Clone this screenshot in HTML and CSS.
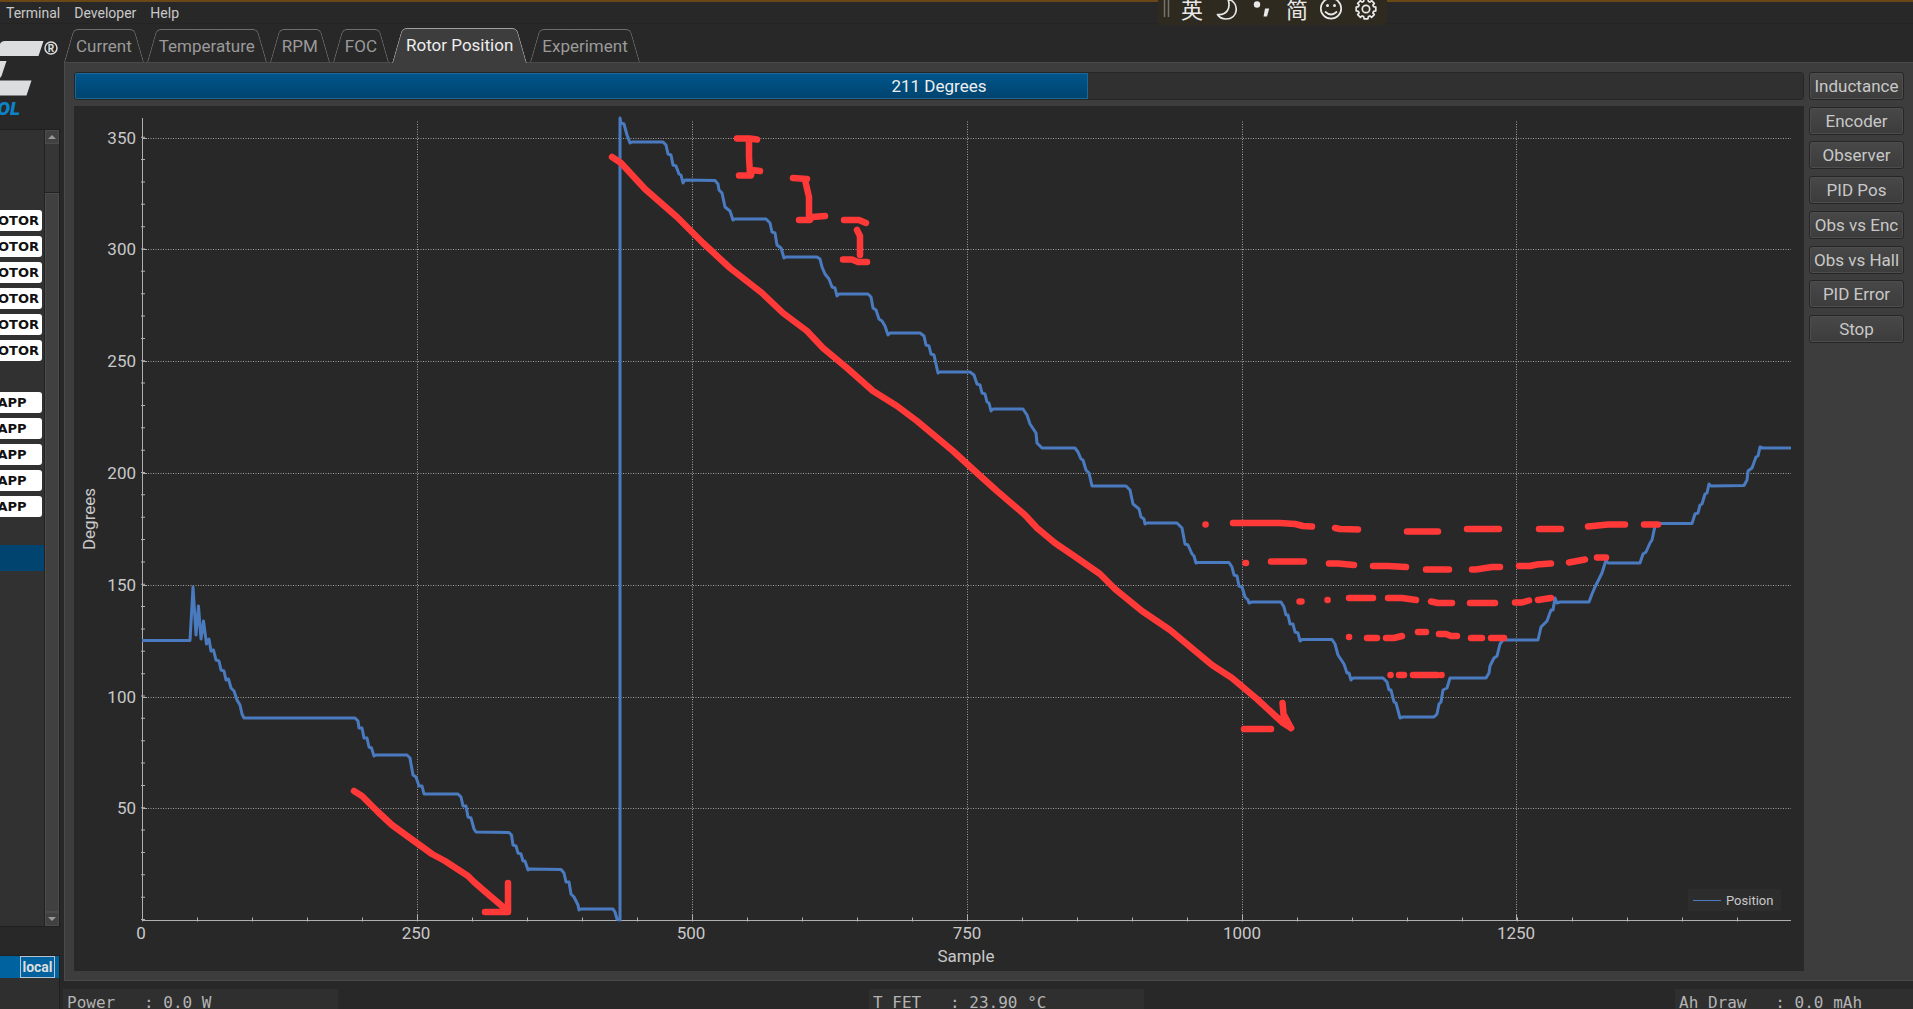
FILE: index.html
```html
<!DOCTYPE html>
<html lang="en">
<head>
<meta charset="utf-8">
<title>Rotor Position</title>
<link rel="stylesheet" href="styles.css">
</head>
<body>
<div class="app">
  <nav class="menubar">
    <button type="button">Terminal</button>
    <button type="button">Developer</button>
    <button type="button">Help</button>
  </nav>

  <div class="ime">
    <svg width="229" height="25" viewBox="1158 0 229 25" aria-hidden="true">
      <path d="M1164.5 0V17M1168.5 0V17" stroke="#77736b" stroke-width="1.5"/>
      <g fill="none" stroke="#e8e8e8" stroke-width="1.7" stroke-linejoin="round" stroke-linecap="round">
        <path d="M1229 -1C1240 4 1238 19 1226 19C1222 19 1219 17 1217.500 14.500C1227 15.500 1231 8 1228 -1"/>
        <circle cx="1331" cy="8.500" r="10.200"/>
        <path d="M1325.500 12Q1331 17 1336.500 12"/>
        <g transform="translate(1366 9)">
          <circle r="3.700"/>
          <path d="M9.800 1.900L7.600 2.400L6.900 3.900L8.300 5.600L5.600 8.300L3.900 6.900L2.400 7.600L1.900 9.800H-1.900L-2.400 7.600L-3.900 6.900L-5.600 8.300L-8.300 5.600L-6.900 3.900L-7.600 2.400L-9.800 1.900V-1.900L-7.600 -2.400L-6.900 -3.900L-8.300 -5.600L-5.600 -8.300L-3.900 -6.900L-2.400 -7.600L-1.900 -9.800H1.900L2.400 -7.600L3.900 -6.900L5.600 -8.300L8.300 -5.600L6.900 -3.900L7.600 -2.400L9.800 -1.900z"/>
        </g>
      </g>
      <g fill="#e8e8e8">
        <circle cx="1257" cy="4.500" r="3.200"/>
        <path d="M1265 8.500h4.200L1267 16.500h-3.500z"/>
        <circle cx="1327.500" cy="5.500" r="1.500"/><circle cx="1334.500" cy="5.500" r="1.500"/>
        <text class="ime-glyph" x="1181" y="18">英</text>
        <text class="ime-glyph" x="1286" y="18">简</text>
      </g>
    </svg>
  </div>

  <div class="workspace">
    <aside class="sidebar">
      <svg class="logo" width="60" height="99" viewBox="0 24 60 99" role="img" aria-label="Logo">
        <path fill="#dcdddf" d="M0 44Q1 41 5 41H43.500L38.500 56H0zM0 61H6.500L1.500 76L0 78zM0 80.500H31.500L26.500 95.500H0z"/>
        <circle cx="51" cy="48" r="6" fill="none" stroke="#dcdddf" stroke-width="1.500"/>
        <text class="logo-mark" x="51" y="52">R</text>
        <text class="logo-name" x="20" y="115">TOOL</text>
      </svg>
      <div class="config">
        <ul class="rows">
          <li><span class="badge">MOTOR</span></li>
          <li><span class="badge">MOTOR</span></li>
          <li><span class="badge">MOTOR</span></li>
          <li><span class="badge">MOTOR</span></li>
          <li><span class="badge">MOTOR</span></li>
          <li><span class="badge">MOTOR</span></li>
          <li></li>
          <li><span class="badge">APP</span></li>
          <li><span class="badge">APP</span></li>
          <li><span class="badge">APP</span></li>
          <li><span class="badge">APP</span></li>
          <li><span class="badge">APP</span></li>
          <li></li>
          <li class="selected"></li>
        </ul>
        <div class="scroll">
          <span class="arrow up"></span>
          <span class="track"></span>
          <span class="thumb"></span>
          <span class="arrow down"></span>
        </div>
      </div>
      <div class="can"><div class="can-row"><span>local</span></div></div>
    </aside>

    <main class="content">
      <div class="tabs" role="tablist">
        <button type="button" role="tab"><span>Current</span></button>
        <button type="button" role="tab"><span>Temperature</span></button>
        <button type="button" role="tab"><span>RPM</span></button>
        <button type="button" role="tab"><span>FOC</span></button>
        <button type="button" role="tab" class="active" aria-selected="true"><span>Rotor Position</span></button>
        <button type="button" role="tab"><span>Experiment</span></button>
      </div>
      <section class="page">
        <div class="view">
          <div class="meter">
            <progress id="pos" max="360" value="211"></progress>
            <label for="pos">211 Degrees</label>
          </div>
          <div class="plot">
            <svg viewBox="74 106 1730 865" role="img" aria-label="Rotor position in degrees by sample">
              <g class="grid">
                <path d="M143 138.500H1791M143 249.500H1791M143 361.500H1791M143 473.500H1791M143 585.500H1791M143 697.500H1791M143 808.500H1791"/>
                <path d="M417.500 920V120M692.500 920V120M967.500 920V120M1242.500 920V120M1516.500 920V120"/>
              </g>
              <path class="axis" d="M142.500 118V920.500H1791"/>
              <path class="axis" d="M142 138.500h5M142 249.500h5M142 361.500h5M142 473.500h5M142 585.500h5M142 697.500h5M142 808.500h5M417.500 920v-5M692.500 920v-5M967.500 920v-5M1242.500 920v-5M1516.500 920v-5"/>
              <path class="minor-y" d="M143 920V118"/>
              <path class="minor-x" d="M142 919.500H1791"/>
              <g class="labels y-labels">
                <text x="136" y="144">350</text>
                <text x="136" y="255">300</text>
                <text x="136" y="367">250</text>
                <text x="136" y="479">200</text>
                <text x="136" y="591">150</text>
                <text x="136" y="703">100</text>
                <text x="136" y="814">50</text>
              </g>
              <g class="labels x-labels">
                <text x="141" y="939">0</text>
                <text x="416" y="939">250</text>
                <text x="691" y="939">500</text>
                <text x="967" y="939">750</text>
                <text x="1242" y="939">1000</text>
                <text x="1516" y="939">1250</text>
                <text x="966" y="962">Sample</text>
                <text transform="translate(95 519) rotate(-90)">Degrees</text>
              </g>
              <polyline class="trace" points="142,640.5 190,640.5 193,587 196,635 198.500,606 201,639 203.500,621 206.500,644 209,639 211,651 213.500,650 216,660 219,661 221,670 224,671 226,680 228.500,679 231,688 234,691 237,700 240,705 242,714 244,718 355,718 358,721 359,728 362,728 364,738 367,738 369,747 371.500,748 374,756 376,755 407,755 410,758 411,764 413,775 416,777 419,786 422,786 424,794 458,794 461,797 463,806 466,806 468,817 471,818 474,829 476,832 509,832.5 511.500,835 513,845 516,846 518,853 521,854 523,861 525,861 528,870 529,869 561,869.5 564,873 566,882 569,882 571,894 574,897 578,905 579,910 581,909 613,909 615,912 617,919 620,920 620,118 621,123 624,124 627,135 630,143 632,142 663,142 666,145 668,154 671,155 673,165 676,166 679,174 681,175 683,183 685,180 715,180.5 718,184 719,190 722,193 725,207 730,211 733,220 735,219 766,219 770,223 772,232 775,233 777,245 781,248 784,258 786,257 817,257 820,259 822,267 825,274 829,279 832,287 835,288 837,296 839,294 868,294 871,297 873,308 876,310 879,319 882,321 885,326 888,335 890,333 920,333 924,336 926,345 929,346 931,354 934,355 938,373 940,372 970,372 974,375 977,384 980,385 982,393 985,394 987,402 989,403 991,411 993,409 1023,409 1027,415 1030,424 1036,433 1037,443 1042,448 1075,448 1078,452 1081,459 1083,460 1086,470 1089,473 1092,486 1126,486 1130,490 1133,504 1139,509 1141,517 1144,519 1145,524 1147,523 1177,523 1182,528 1185,544 1188,545 1192,554 1194,556 1196,563 1198,562.5 1229,562.5 1232,567 1234,575 1237,576 1239,586 1242,587 1245,597 1248,600 1249,603 1252,602 1281,602 1284,607 1286,615 1288,615 1290,624 1293,624 1295,632 1298,633 1300,641 1302,639.5 1332,639.5 1335,644 1338,655 1344,664 1347,673 1349,673 1351,680 1353,678 1383,678 1387,682 1389,690 1391,690 1394,702 1396,703 1400,718 1403,717 1434,717 1437,714 1439,704 1441,702 1443,690 1447,688 1450,678 1486,678 1489,673 1490,666 1494,658 1497,656 1500,644 1503,640 1538,640 1541,627 1547,621 1551,610 1553,610 1555,598 1557,603 1560,602 1589,602 1592,594 1595,587 1600,577 1602,573 1606,560 1608,563 1640,563 1643,554 1646,552 1650,543 1652,540 1655,526 1658,523.5 1692,523.5 1695,514 1698,513 1700,505 1702,504 1705,494 1707,493 1709,484 1711,486 1744,485.5 1747,480 1748,471 1752,468 1756,457 1758,456 1760,447 1763,448 1791,448"/>
              <rect x="1688" y="889" width="93" height="22" fill="#2d2d2d"/>
              <path d="M1693 900.500H1721" stroke="#4a7bc0"/>
              <text class="legend" x="1726" y="905">Position</text>
              <!-- marker pen: brackets, arrows, level lines -->
              <g class="pen">
                <path d="M737 138.500H750L757 139.500M749 139V157L750 174M739 175.500H751L752 170L760 171"/>
                <path d="M793 178L807 179M805 180L809 197V218M799 220H810L812 217L825 216"/>
                <path d="M844 220H859L866 223M857 230L860 236V255M843 259.500H852L858 262H867"/>
                <path d="M612 157L621 163L645 189L677 217L703 243L730 268L762 293L783 313L807 331L823 348L847 368L873 391L897 406L917 421L953 451L977 473L997 491L1025 515L1037 528L1055 543L1077 558L1100 574L1115 589L1142 611L1170 630L1212 665L1232 678L1257 699L1283 723L1291 728"/>
                <path d="M1282.500 703L1283.500 714L1291 728M1280 719L1288 725M1244 729H1271"/>
                <path d="M354 791L362 796L378 812L392 825L432 854L445 861L468 876L474 882L489 895L508 911M508 883V912H485"/>
                <path d="M1205.500 524.500h.1M1233 523H1280L1295 524L1303 526L1312 526.500M1335 528L1340 529L1358 529.500M1407 531.500H1438M1467 529H1499M1539 529H1561M1588 526.500L1608 524.500H1625M1644 524.500H1658"/>
                <path d="M1245.500 563h.5M1271 561.500H1304M1329 563.500H1338L1354 565M1373 566H1388L1406 567M1426 569.500H1449M1472 569.500H1476L1492 567H1500M1519 566H1530L1537 564.500L1551 563.500M1569 562.500L1585 559.500M1597 557.500H1606"/>
                <path d="M1299.500 601.500h2M1327.500 600h.1M1349 598H1373M1388 598H1402L1416 600M1431 601.500L1438 603H1452M1470 603H1495M1515 602.500H1522L1529 600.500M1538 600L1551 598"/>
                <path d="M1349 637h.1M1367 638H1377M1386 638H1394L1402 636M1418 632H1426M1439 634H1446L1451 636H1457M1471 638H1482M1491 638H1504"/>
                <path d="M1390.500 675h.1M1399 675H1404M1413 675H1437M1441.500 675h.1"/>
              </g>
            </svg>
          </div>
        </div>
        <div class="actions">
          <button type="button">Inductance</button>
          <button type="button">Encoder</button>
          <button type="button">Observer</button>
          <button type="button">PID Pos</button>
          <button type="button">Obs vs Enc</button>
          <button type="button">Obs vs Hall</button>
          <button type="button">PID Error</button>
          <button type="button">Stop</button>
        </div>
      </section>
      <footer class="status">
        <pre>Power   : 0.0 W</pre>
        <pre>T FET   : 23.90 °C</pre>
        <pre>Ah Draw   : 0.0 mAh</pre>
      </footer>
    </main>
  </div>
</div>
</body>
</html>
```
FILE: styles.css
```css
* { box-sizing: border-box; }
body {
  margin: 0;
  background: #282828;
  color: #c8c8c8;
  font: 17px/20px Roboto, "Liberation Sans", sans-serif;
  overflow: hidden;
}
button { font: inherit; color: inherit; background: none; border: 0; padding: 0; margin: 0; }

.app { height: 100vh; display: flex; flex-direction: column; border-top: 2px solid #6a4816; }

.menubar { display: flex; gap: 14px; height: 22px; flex: none; padding-left: 6px; border-bottom: 1px solid #242424; }
.menubar button { font-size: 14px; line-height: 20px; }

.ime { position: absolute; top: 0; left: 1158px; height: 25px; background: #2e2a20; }
.ime svg { display: block; }
.ime-glyph { font: 22px "Noto Sans CJK SC", sans-serif; }

.workspace { flex: 1; min-height: 0; display: flex; }

.sidebar { width: 60px; flex: none; display: flex; flex-direction: column; overflow: hidden; }
.logo { display: block; flex: none; height: 99px; margin-bottom: 6px; }
.logo-mark { font: bold 10px Roboto, sans-serif; fill: #dcdddf; text-anchor: middle; }
.logo-name { font: italic 900 19px Roboto, sans-serif; fill: #0b84cc; text-anchor: end; }

.config { flex: 1; min-height: 0; display: flex; background: #313131; border: 1px solid #202020; border-left: 0; }
.rows { list-style: none; margin: 0; padding: 77px 0 0; flex: 1; min-width: 0; }
.rows li { height: 26px; display: flex; justify-content: flex-end; align-items: center; padding: 1px 2px 0 0; }
.rows .selected { background: #00446f; }
.badge {
  flex: none; width: 60px; height: 21px; border-radius: 3px; background: #fff; color: #111;
  font: bold 13px/21px "DejaVu Sans", sans-serif; text-align: center;
}
.scroll { width: 15px; flex: none; display: flex; flex-direction: column; border-left: 1px solid #222; }
.arrow { height: 14px; display: flex; justify-content: center; align-items: center; background: #414141; border: 1px solid #4c4c4c; }
.arrow::before { content: ""; border: 4px solid transparent; }
.up::before { border-top: 0; border-bottom-color: #999; }
.down::before { border-bottom: 0; border-top-color: #999; }
.track { height: 49px; background: #363636; border-bottom: 1px solid #222; }
.thumb { flex: 1; background: #404040; border: 1px solid #4c4c4c; }

.can { height: 54px; flex: none; margin-top: 28px; background: #2f2f2f; border: 1px solid #202020; border-width: 1px 1px 0 0; }
.can-row { height: 22px; display: flex; justify-content: flex-end; padding-right: 4px; background: #0063a0; }
.can-row span { border: 1px solid #b5c4cf; width: 35px; font-size: 14px; font-weight: bold; line-height: 20px; color: #ddd; display: flex; justify-content: center; }

.content { flex: 1; min-width: 0; display: flex; flex-direction: column; padding-left: 4px; }
.tabs { display: flex; gap: 3px; height: 38px; flex: none; align-items: flex-end; }
.tabs button { position: relative; height: 33px; padding: 0 12px; color: #9a9a9a; }
.tabs button span { position: relative; z-index: 1; }
.tabs button::before, .tabs button::after {
  content: ""; position: absolute; top: 0; bottom: 0; width: 51%;
  border-top: 1px solid #6e6e6e; transform-origin: bottom;
}
.tabs button::before { left: 0; border-left: 1px solid #6e6e6e; border-top-left-radius: 5px; transform: skewX(-16deg); }
.tabs button::after { right: 0; border-right: 1px solid #6e6e6e; border-top-right-radius: 5px; transform: skewX(16deg); }
.tabs .active { height: 34px; padding: 0 14px; color: #eee; z-index: 1; }
.tabs .active::before, .tabs .active::after { background: #3d3d3d; border-color: #a0a0a0; bottom: -1px; }

.page {
  flex: 1; min-height: 0; display: flex; gap: 5px; padding: 9px;
  background: #3d3d3d; border: 1px solid #4a4a4a; border-right: 0;
}
.view { flex: 1; min-width: 0; display: flex; flex-direction: column; gap: 6px; }
.meter { position: relative; height: 28px; flex: none; }
.meter progress { display: block; width: 100%; height: 28px; appearance: none; border: 1px solid #262626; border-radius: 3px; background: #303030; overflow: hidden; }
.meter progress::-webkit-progress-bar { background: #303030; }
.meter progress::-webkit-progress-value { background: linear-gradient(#00558b, #00446f); border: 1px solid #1c6798; }
.meter label { position: absolute; inset: 0; text-align: center; line-height: 28px; color: #eee; }
.plot { flex: 1; min-height: 0; background: #282828; }
.plot svg { display: block; width: 100%; height: 100%; }

.grid path { fill: none; stroke: #a0a0a0; stroke-dasharray: 1 1.5; }
.axis { fill: none; stroke: #b0b0b0; }
.minor-y { stroke: #b0b0b0; stroke-width: 4; stroke-dasharray: 1 21.35; }
.minor-x { stroke: #b0b0b0; stroke-width: 4; stroke-dasharray: 1 54; }
.labels text { font-size: 17px; fill: #c8c8c8; }
.y-labels { text-anchor: end; }
.x-labels { text-anchor: middle; }
.legend { font-size: 13px; fill: #c8c8c8; }
.trace { fill: none; stroke: #4a7bc0; stroke-width: 3; stroke-linejoin: round; }
.pen path { fill: none; stroke: #ff3838; stroke-width: 6.500; stroke-linecap: round; stroke-linejoin: round; }

.actions { width: 95px; height: 271px; flex: none; display: flex; flex-direction: column; justify-content: space-between; }
.actions button {
  height: 28px; border: 1px solid #262626; border-radius: 3px; white-space: nowrap; line-height: 26px;
  background: linear-gradient(#484848, #3c3c3c); box-shadow: inset 0 0 0 1px #4d4d4d;
}

.status { height: 28px; flex: none; display: flex; justify-content: space-between; align-items: flex-end; margin: 0 -37px 0 -1px; }
.status pre {
  margin: 0; width: 275px; height: 20px; padding: 4px 4px 0; background: #2f2f2f; color: #b4b4b4;
  font: 16px/20px "DejaVu Sans Mono", monospace; overflow: hidden;
}
```
